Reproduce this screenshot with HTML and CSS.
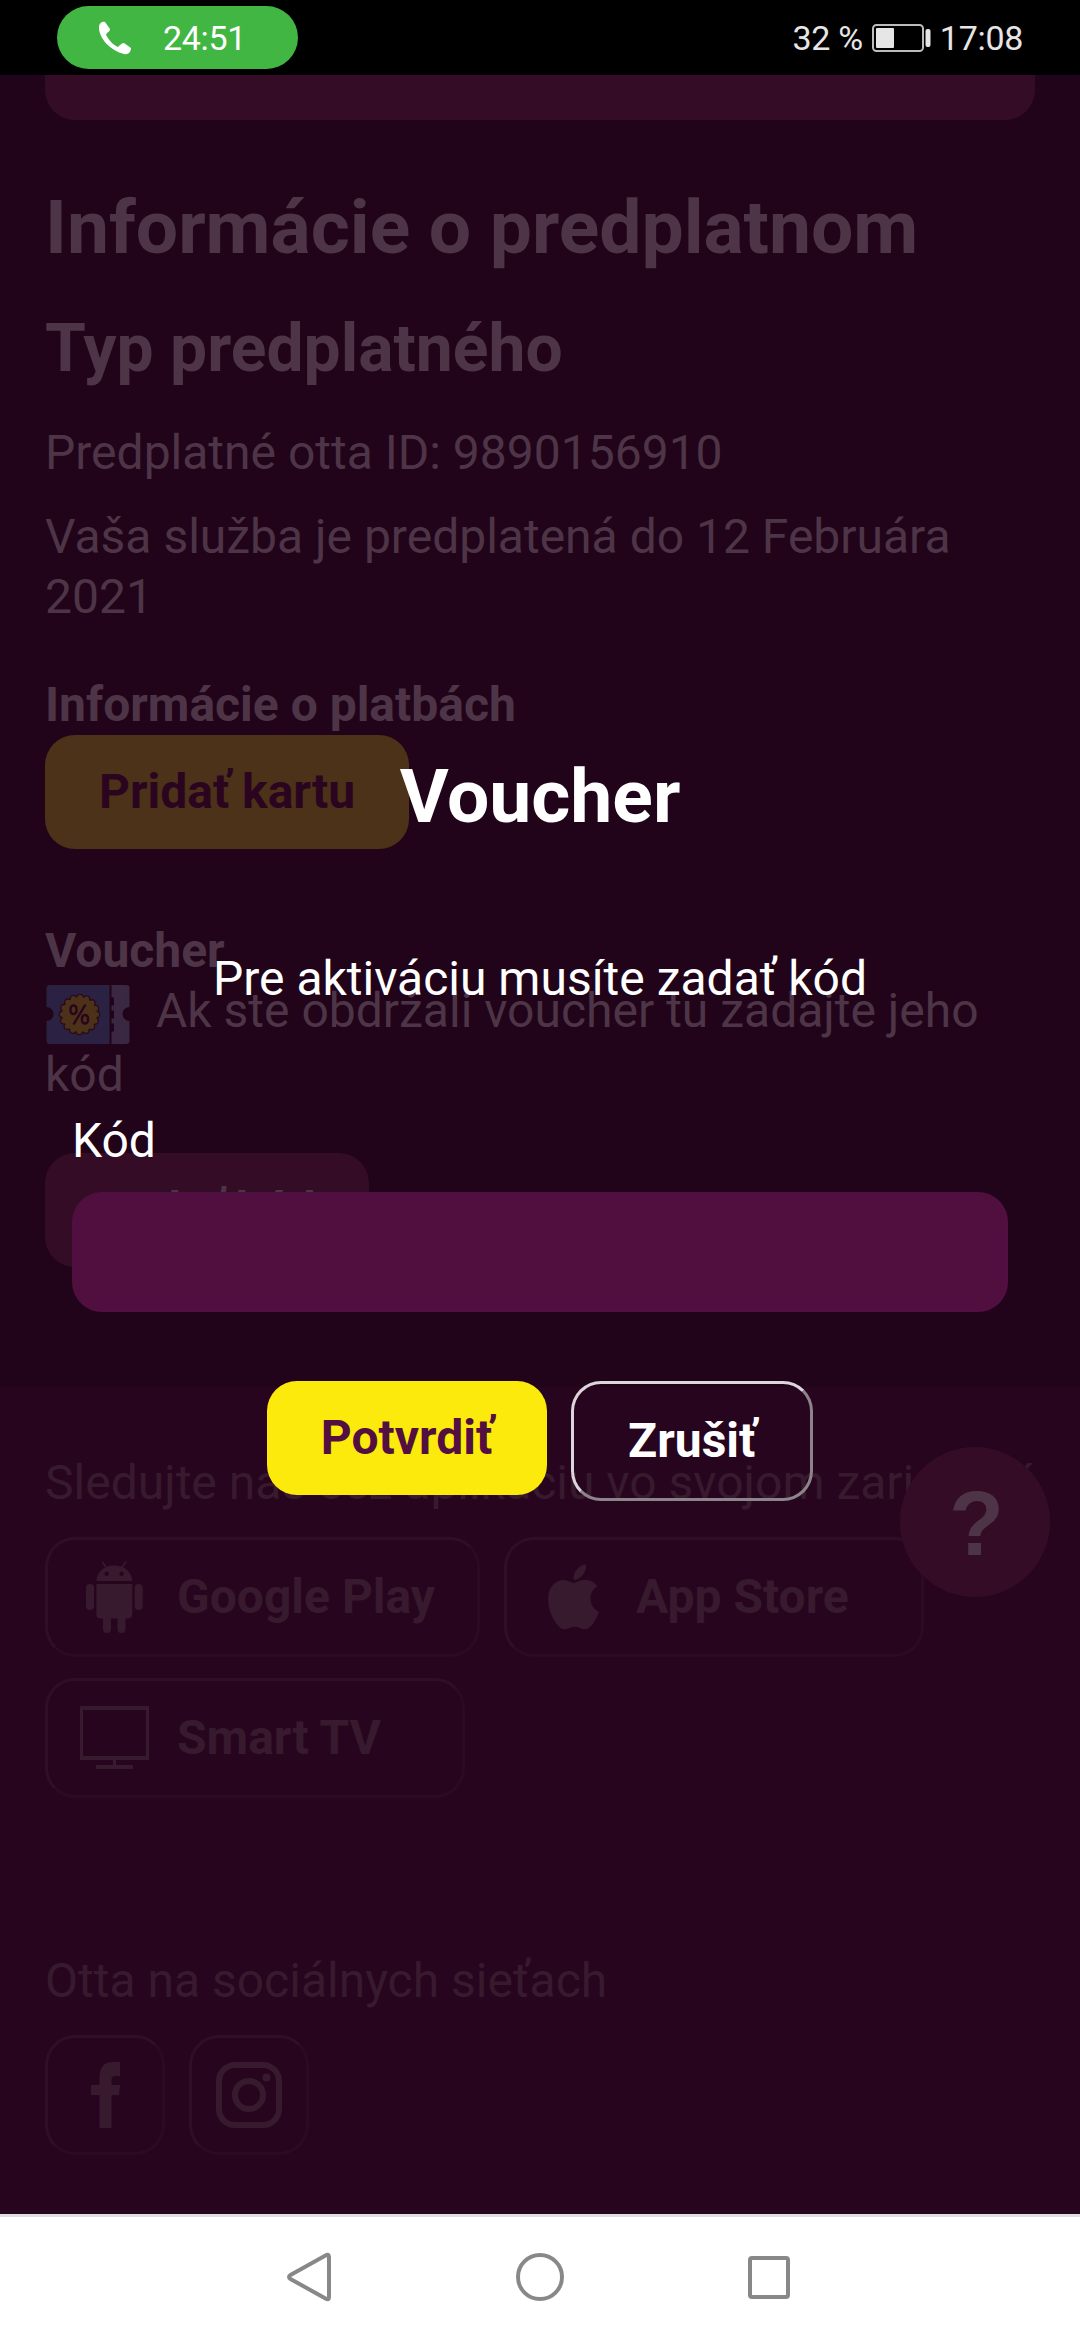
FILE: index.html
```html
<!DOCTYPE html>
<html lang="sk">
<head>
<meta charset="utf-8">
<title>Voucher</title>
<link rel="stylesheet" href="styles.css">
</head>
<body>
<div class="screen">
  <header class="status">
    <div class="call">
      <svg class="call-icon" width="34" height="34" viewBox="0 0 34 34"><path d="M1 5C2 1 5 0 7 1L12 8C12 11 9 11 8 14C11 19 15 24 20 26C22 24 24 22 26 22L33 27C33 31 30 34 26 33C13 30 0 17 1 5Z" fill="#fff"/></svg>
      <span>24:51</span>
    </div>
    <div class="status-right">
      <span>32 %</span>
      <svg width="59" height="28" viewBox="0 0 59 28"><rect x="1" y="1" width="50" height="26" rx="3.5" fill="none" stroke="#bcbcbc" stroke-width="2"/><rect x="4" y="4" width="18" height="20" rx="1" fill="#e6e6e6"/><rect x="53.500" y="5" width="5" height="18" rx="2" fill="#e6e6e6"/></svg>
      <span>17:08</span>
    </div>
  </header>

  <div class="page">
    <main class="content">
      <div class="card"></div>
      <h1>Informácie o predplatnom</h1>
      <h2>Typ predplatného</h2>
      <p>Predplatné otta ID: 9890156910</p>
      <p>Vaša služba je predplatená do 12 Februára 2021</p>
      <h3>Informácie o platbách</h3>
      <button class="btn btn-card">Pridať kartu</button>
      <h3 class="voucher-title">Voucher</h3>
      <p class="voucher-text"><svg class="ticket" width="86" height="61" viewBox="0 0 86 61">
        <path d="M5 1H64.500V60H5Q1.500 60 1.500 57V37A7 7 0 0 0 1.500 23V4Q1.500 1 5 1Z" fill="#2b2142"/>
        <path d="M66.500 1H81Q84.500 1 84.500 4V23A7 7 0 0 0 84.500 37V57Q84.500 60 81 60H66.500Z" fill="#3a2742"/>
        <g fill="#210419"><rect x="65" y="13.500" width="4" height="8"/><rect x="65" y="26.500" width="4" height="8"/><rect x="65" y="39.500" width="4" height="8"/></g>
        <circle cx="34.500" cy="30.500" r="18.500" fill="#2b0a1c"/>
        <circle cx="34.500" cy="30.500" r="17" fill="none" stroke="#2b0a1c" stroke-width="7.600" stroke-linecap="round" stroke-dasharray="0 6.676"/>
        <circle cx="34.500" cy="30.500" r="17.300" fill="#4b3219"/>
        <circle cx="34.500" cy="30.500" r="17" fill="none" stroke="#4b3219" stroke-width="5" stroke-linecap="round" stroke-dasharray="0 6.676"/>
        <g fill="none" stroke="#2b051b" stroke-width="2.400"><path d="M40.500 20.500L28.500 40.500"/><rect x="25.500" y="21.500" width="6" height="8.500" rx="3"/><rect x="37" y="31" width="6" height="8.500" rx="3"/></g>
      </svg>Ak ste obdržali voucher tu zadajte jeho kód</p>
      <button class="btn btn-voucher">Zadať kód</button>
    </main>

    <footer class="footer">
      <p>Sledujte nás cez aplikáciu vo svojom zariadení</p>
      <div class="stores">
        <a class="store">
          <svg width="129" height="114" viewBox="0 0 129 114" fill="#371a2e"><path d="M48.400 41C49 31 57 25.500 66.300 25.500S83.500 31 84.200 41Z"/><path d="M54 21.500L58.500 28M78 21.500L73.500 28" stroke="#371a2e" stroke-width="1.500"/><circle cx="58.700" cy="33.700" r="2.200" fill="#28051e"/><circle cx="73.600" cy="33.700" r="2.200" fill="#28051e"/><path d="M48.400 44H84.200V74Q84.200 78.500 80 78.500H52.500Q48.400 78.500 48.400 74Z"/><rect x="38" y="44" width="8" height="26" rx="4"/><rect x="86.700" y="44" width="8" height="26" rx="4"/><rect x="55" y="66" width="8" height="27" rx="4"/><rect x="69.500" y="66" width="8" height="27" rx="4"/></svg>
          <span>Google Play</span>
        </a>
        <a class="store">
          <svg width="129" height="114" viewBox="0 0 129 114" fill="#371a2e"><path transform="translate(40.500 19.500) scale(.135 .1455)" d="M318.700 268.700c-.2-36.700 16.400-64.400 50-84.800-18.800-26.900-47.200-41.700-84.700-44.600-35.500-2.800-74.300 20.700-88.500 20.700-15 0-49.400-19.700-76.400-19.700C63.300 141.200 4 184.800 4 273.500q0 39.300 14.400 81.200c12.800 36.700 59 126.700 107.200 125.200 25.200-.6 43-17.900 75.800-17.900 31.800 0 48.300 17.900 76.400 17.900 48.600-.7 90.400-82.500 102.600-119.300-65.200-30.700-61.700-90-61.700-91.900zm-56.600-164.200c27.300-32.400 24.800-61.900 24-72.500-24.100 1.400-52 16.400-67.900 34.900-17.500 19.800-27.800 44.300-25.600 71.900 26.100 2 49.900-11.400 69.500-34.300z"/></svg>
          <span>App Store</span>
        </a>
        <a class="store">
          <svg width="129" height="114" viewBox="0 0 129 114" fill="#371a2e"><path fill-rule="evenodd" d="M32 25H101V79H32ZM35 29V75H98V29Z"/><path d="M65 79H68V84H85V88H48V84H65Z"/></svg>
          <span>Smart TV</span>
        </a>
      </div>
      <p class="social-title">Otta na sociálnych sieťach</p>
      <div class="social">
        <a class="social-link"><svg width="114" height="114" viewBox="0 0 114 114" fill="#371a2e"><path d="M72 24V38H68Q63.500 38 63.500 42V47H72L71 57H63.500V90H51.500V57H43V47H51.500V40Q51.500 24 65 24Z"/></svg></a>
        <a class="social-link"><svg width="114" height="114" viewBox="0 0 114 114" fill="none" stroke="#371a2e" stroke-width="6"><rect x="27" y="27" width="60" height="60" rx="16"/><circle cx="57" cy="57" r="14"/><circle cx="74.500" cy="39.500" r="4" fill="#371a2e" stroke="none"/></svg></a>
      </div>
    </footer>
    <div class="help">?</div>

    <section class="modal">
      <h1>Voucher</h1>
      <p class="modal-text">Pre aktiváciu musíte zadať kód</p>
      <label for="code">Kód</label>
      <input id="code" class="code" type="text">
      <div class="actions">
        <button class="btn btn-ok">Potvrdiť</button>
        <button class="btn btn-cancel">Zrušiť</button>
      </div>
    </section>
  </div>

  <nav class="nav">
    <svg width="50" height="56" viewBox="0 0 50 56"><path d="M39.500 6.500Q43 4.500 43 8V48Q43 51.500 39.500 49.500L4.500 30Q1.500 28 4.500 26Z"/></svg>
    <svg width="50" height="56" viewBox="0 0 50 56"><circle cx="25" cy="28" r="22"/></svg>
    <svg width="50" height="56" viewBox="0 0 50 56"><rect x="6" y="9" width="38" height="39" rx="2"/></svg>
  </nav>
</div>
</body>
</html>
```
FILE: styles.css
```css
* { box-sizing: border-box; }
body { margin: 0; background: #000; font-family: Roboto, sans-serif; font-size: 48px; line-height: 60px; }
h1, h2, h3, p { margin: 0; }
svg { display: block; }

.screen { display: flex; flex-direction: column; width: 1080px; height: 2340px; overflow: hidden; }

.status { display: flex; justify-content: space-between; align-items: center; flex: none; height: 75px; padding: 0 57px; font-size: 34px; line-height: 40px; letter-spacing: -.3px; }
.call { display: flex; align-items: center; gap: 31px; width: 241px; height: 63px; padding-left: 41px; border-radius: 32px; background: #42b642; color: #fff; }
.status-right { display: flex; align-items: center; gap: 9px; color: #e6e6e6; }

.page { position: relative; flex: none; display: flex; flex-direction: column; height: 2139px; background: #210419; color: #4d3547; }
.content { height: 1312px; padding: 0 45px; }
.card { height: 45px; border-radius: 0 0 30px 30px; background: #340c25; }
h1 { font-size: 75px; line-height: 90px; }
h2 { font-size: 66px; line-height: 78px; }
h3 { font-size: 48px; }
.content h1 { margin-top: 62px; }
.content h2 { margin-top: 38px; margin-bottom: 35px; }
.content p + p { margin-top: 24px; }
.content h3 { margin-top: 48px; }
.content .voucher-title { margin-top: 72px; }
.ticket { display: inline-block; vertical-align: -18px; margin-right: 25px; }

.btn { display: block; margin: 0; padding: 27px 54px; border: 0; border-radius: 30px; font: bold 48px/60px Roboto, sans-serif; }
.btn-card { background: #4b3219; color: #2b051f; }
.btn-voucher { margin-top: 48px; background: #340c25; color: #4d3547; }

.footer { flex: 1; padding: 66px 45px 0; background: #28051e; color: #371a2e; }
.stores { display: flex; flex-wrap: wrap; gap: 21px 24px; margin-top: 24px; }
.store { display: flex; align-items: center; min-width: 420px; height: 120px; padding-right: 42px; border: 3px solid; border-color: #310e27 #2d0923 #2d0923 #310e27; border-radius: 30px; font-weight: bold; }
.social-title { margin-top: 153px; }
.social { display: flex; gap: 24px; margin-top: 24px; }
.social-link { width: 120px; height: 120px; border: 3px solid; border-color: #310e27 #2d0923 #2d0923 #310e27; border-radius: 30px; }

.help { position: absolute; right: 30px; top: 1372px; width: 150px; height: 150px; padding-left: 3px; border-radius: 50%; background: #340c25; color: #4d3547; font: bold 90px/154px "Liberation Sans", sans-serif; text-align: center; }

.modal { position: absolute; inset: 0; padding: 676px 72px 0; color: #fff; }
.modal h1, .modal-text { text-align: center; }
.modal-text { margin-top: 108px; }
.modal label { display: block; margin-top: 102px; }
.code { display: block; width: 100%; height: 120px; margin-top: 21px; border: 3px solid; border-color: #4e103f #530f41 #530f41 #4e103f; border-radius: 30px; background: #510f40; }
.actions { display: flex; justify-content: center; align-items: flex-start; gap: 24px; margin-top: 69px; }
.btn-ok { background: #fbea0c; color: #520f40; }
.btn-cancel { border: 3px solid; border-color: #dcd5db #8b848a #8b848a #dcd5db; background: transparent; color: #fff; }

.nav { display: flex; justify-content: center; gap: 179px; flex: none; height: 126px; padding-top: 32px; border-top: 3px solid #e2dde2; background: #fff; }
.nav svg { fill: none; stroke: #888; stroke-width: 4; }
```
